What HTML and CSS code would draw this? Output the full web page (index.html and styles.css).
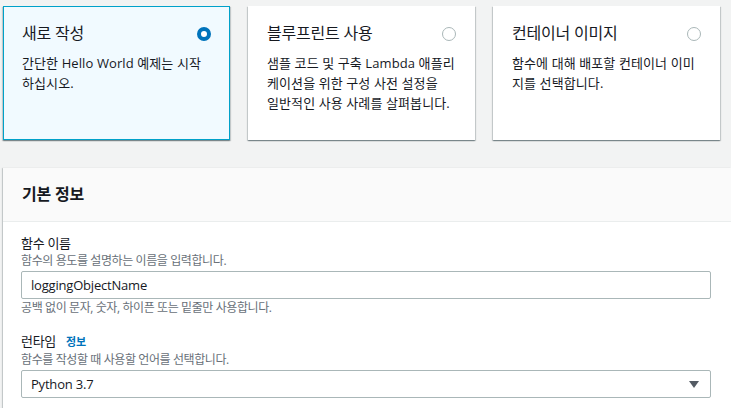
FILE: index.html
```html
<!DOCTYPE html>
<html lang="ko">
<head>
<meta charset="utf-8">
<link rel="stylesheet" href="styles.css">
</head>
<body>
<div class="page">
  <div class="cards">
    <div class="card selected">
      <div class="card-head">
        <span class="card-title">새로 작성</span>
        <span class="radio on"></span>
      </div>
      <p class="card-desc">간단한 Hello World 예제는 시작<br>하십시오.</p>
    </div>
    <div class="card">
      <div class="card-head">
        <span class="card-title">블루프린트 사용</span>
        <span class="radio"></span>
      </div>
      <p class="card-desc">샘플 코드 및 구축 Lambda 애플리<br>케이션을 위한 구성 사전 설정을<br>일반적인 사용 사례를 살펴봅니다.</p>
    </div>
    <div class="card">
      <div class="card-head">
        <span class="card-title">컨테이너 이미지</span>
        <span class="radio"></span>
      </div>
      <p class="card-desc">함수에 대해 배포할 컨테이너 이미<br>지를 선택합니다.</p>
    </div>
  </div>

  <section class="panel">
    <div class="panel-header">
      <h2 class="panel-title">기본 정보</h2>
    </div>
    <div class="panel-body">
      <div class="field">
        <div class="label">함수 이름</div>
        <div class="desc">함수의 용도를 설명하는 이름을 입력합니다.</div>
        <div class="input">loggingObjectName</div>
        <div class="hint">공백 없이 문자, 숫자, 하이픈 또는 밑줄만 사용합니다.</div>
      </div>
      <div class="field second">
        <div class="label">런타임 <a class="info">정보</a></div>
        <div class="desc">함수를 작성할 때 사용할 언어를 선택합니다.</div>
        <div class="input select">
          <span>Python 3.7</span>
          <span class="caret"></span>
        </div>
      </div>
    </div>
  </section>
</div>
</body>
</html>
```

FILE: styles.css
```css
* { box-sizing: border-box; }

html, body {
  margin: 0;
  padding: 0;
  background: #f2f3f3;
  overflow: hidden;
}

body {
  font-family: "Open Sans", "Noto Sans CJK KR", sans-serif;
  color: #16191f;
}

.page {
  padding: 6px 11px 0 3px;
}

.cards {
  display: grid;
  grid-template-columns: repeat(3, 227px);
  column-gap: 18px;
}

.card {
  height: 134px;
  background: #ffffff;
  border: 1px solid transparent;
  box-shadow: 0 1px 1px 0 rgba(0, 28, 36, 0.3), 1px 1px 1px 0 rgba(0, 28, 36, 0.15), -1px 1px 1px 0 rgba(0, 28, 36, 0.15);
  padding: 13px 17px 0 18px;
}

.card.selected {
  background: #f1faff;
  border-color: #00a1c9;
}

.card-head {
  display: flex;
  align-items: center;
  justify-content: space-between;
  height: 26px;
}

.card-title {
  font-size: 16px;
  line-height: 26px;
  letter-spacing: -0.2px;
}

.radio {
  width: 14px;
  height: 14px;
  border-radius: 50%;
  border: 1px solid #aab7b8;
  background: #fff;
  margin-top: 2px;
  margin-right: 1px;
}

.radio.on {
  border: 4px solid #0073bb;
}

.card-desc {
  margin: 7px -8px 0 0;
  font-size: 13px;
  line-height: 20px;
  letter-spacing: 0.1px;
}

.panel {
  margin-top: 28px;
  margin-right: -11px;
  background: #fff;
  box-shadow: 0 1px 1px 0 rgba(0, 28, 36, 0.3), -1px 0 1px 0 rgba(0, 28, 36, 0.15);
}

.panel-header {
  height: 54px;
  background: #fafafa;
  border-bottom: 1px solid #eaeded;
  padding: 0 19px 4px;
  display: flex;
  align-items: center;
}

.panel-title {
  margin: 0;
  font-size: 16px;
  font-weight: 700;
  letter-spacing: -0.2px;
}

.panel-body {
  padding: 11px 20px 14px 18px;
}

.label {
  font-size: 13px;
  line-height: 20px;
  letter-spacing: -0.3px;
}

.info {
  color: #0073bb;
  font-size: 11px;
  font-weight: 700;
  margin-left: 7px;
}

.desc, .hint {
  font-size: 12px;
  line-height: 16px;
  color: #687078;
  letter-spacing: -0.4px;
}

.input {
  margin-top: 2px;
  height: 28px;
  border: 1px solid #aab7b8;
  border-radius: 2px;
  padding: 0 9px;
  font-size: 13px;
  line-height: 26px;
  letter-spacing: -0.2px;
  display: flex;
  align-items: center;
  justify-content: space-between;
}

.hint {
  margin-top: 1px;
}

.field.second {
  margin-top: 15px;
}

.caret {
  width: 0;
  height: 0;
  border-left: 5px solid transparent;
  border-right: 5px solid transparent;
  border-top: 7px solid #545b64;
  margin-right: 2px;
}
```
